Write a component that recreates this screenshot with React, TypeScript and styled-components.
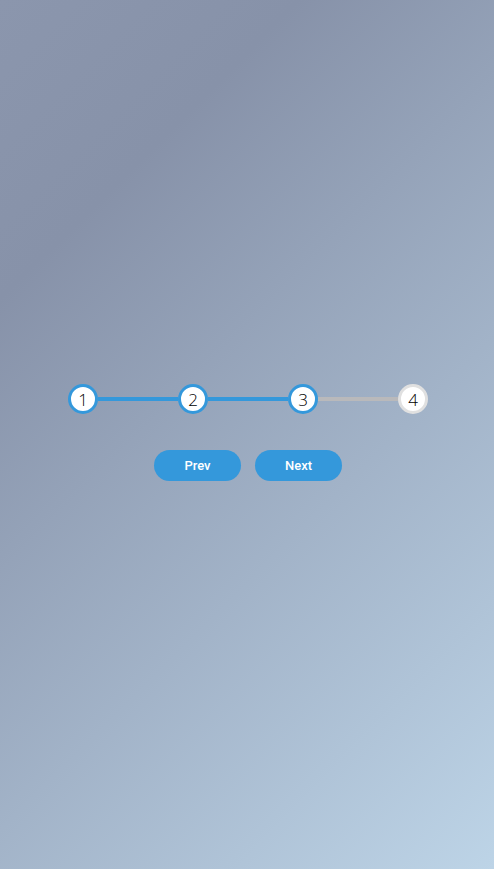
import { FC, Fragment, useState } from 'react';
import styled, { createGlobalStyle } from 'styled-components';

const GlobalStyle = createGlobalStyle`
	* {
		box-sizing: border-box;
	}
	html, body {
		margin: 0;
		padding: 0;
	}
	body {
		min-height: 100vh;
		background-image: linear-gradient(135deg, #8b96ad 0%, #8792a9 22%, #bdd4e7 100%);
		font-family: 'Open Sans', Lato, sans-serif;
	}
`;

const Page = styled.div`
	min-height: 100vh;
	display: flex;
	flex-direction: column;
	align-items: center;
	justify-content: center;
	padding: 0 0 4px 2px;
`;

const Progress = styled.div`
	width: 360px;
	display: flex;
	align-items: center;
	margin-bottom: 36px;
`;

const Circle = styled.div<{ active: boolean }>`
	width: 30px;
	height: 30px;
	flex: 0 0 30px;
	border-radius: 50%;
	background: #ffffff;
	border: 3px solid ${({ active }) => (active ? '#3498db' : '#e0e0e0')};
	display: flex;
	align-items: center;
	justify-content: center;
	font-size: 17px;
	font-weight: 300;
	color: #000;
	line-height: 1;
`;

const Segment = styled.div<{ active: boolean }>`
	flex: 1;
	height: 4px;
	background: ${({ active }) => (active ? '#3498db' : '#b9b9bb')};
`;

const Actions = styled.div`
	display: flex;
	gap: 14px;
`;

const Btn = styled.button`
	width: 87px;
	height: 31px;
	border: none;
	border-radius: 16px;
	background: #3498db;
	color: #ffffff;
	font-family: Roboto, 'Liberation Sans', sans-serif;
	font-size: 13px;
	font-weight: 500;
	cursor: pointer;
	&:focus {
		outline: none;
	}
`;

const steps = [1, 2, 3, 4];

const App: FC = () => {
	const [current, setCurrent] = useState(3);

	return (
		<>
			<GlobalStyle />
			<Page>
				<Progress>
					{steps.map((n, idx) => (
						<Fragment key={n}>
							{idx > 0 && <Segment active={n <= current} />}
							<Circle active={n <= current}>{n}</Circle>
						</Fragment>
					))}
				</Progress>
				<Actions>
					<Btn onClick={() => setCurrent((c) => Math.max(1, c - 1))}>Prev</Btn>
					<Btn onClick={() => setCurrent((c) => Math.min(steps.length, c + 1))}>Next</Btn>
				</Actions>
			</Page>
		</>
	);
};

export default App;
